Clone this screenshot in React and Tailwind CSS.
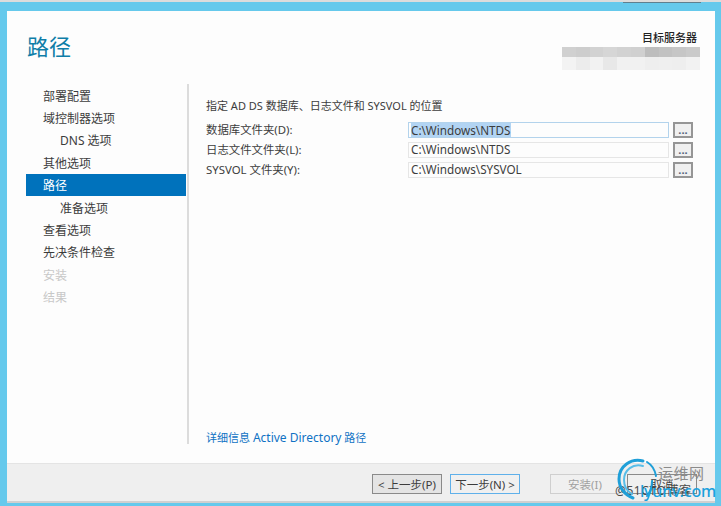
const FONT = "font-['Noto_Sans','Noto_Sans_CJK_SC',sans-serif]";

const navItems = [
  { label: "部署配置" },
  { label: "域控制器选项" },
  { label: "DNS 选项", sub: true },
  { label: "其他选项" },
  { label: "路径", active: true },
  { label: "准备选项", sub: true },
  { label: "查看选项" },
  { label: "先决条件检查" },
  { label: "安装", disabled: true },
  { label: "结果", disabled: true },
];

const paths = [
  { label: "数据库文件夹(D):", value: "C:\\Windows\\NTDS", focused: true },
  { label: "日志文件文件夹(L):", value: "C:\\Windows\\NTDS" },
  { label: "SYSVOL 文件夹(Y):", value: "C:\\Windows\\SYSVOL" },
];

// pixelated blur that hides the server name
const blurTop = ["#d0d0d0", "#cdcdcd", "#d2d2d2", "#d6d6d6", "#d2d2d2", "#d0d0d0", "#bdbdbd", "#c2c2c2", "#c6c6c6", "#cacaca"];
const blurBottom = ["#f3f3f3", "#ececec", "#f2f2f2", "#e8e8e8", "#f1f1f1", "#f1f1f1", "#eeeeee", "#efefef", "#eeeeee", "#f2f2f2"];

function NavItem({ label, sub, active, disabled }) {
  let color = "text-[#3c3c3c]";
  if (active) color = "bg-[#0072bc] text-white";
  if (disabled) color = "text-[#c8c8c8]";
  return (
    <div className={`h-[22.4px] flex items-center text-[12px] ${active ? "pt-[2px]" : "pt-[3px]"} ${sub ? "pl-[34px]" : "pl-[17px]"} ${color}`}>
      {label}
    </div>
  );
}

function PathRow({ label, value, focused }) {
  return (
    <div className="flex items-center h-[20px]">
      <div className="w-[202px] text-[11.4px] text-[#3c3c3c]">{label}</div>
      <div className={`w-[261px] h-[16px] border flex items-center pl-[2px] text-[11.7px] text-[#3c3c3c] ${focused ? "border-[#b3d3ec]" : "border-[#e6e6e6]"}`}>
        {focused ? (
          <span className="bg-[#b2d4f3] h-[14px] leading-[14px] w-[100px]">{value}</span>
        ) : (
          value
        )}
      </div>
      <button className="ml-[4px] w-[20px] h-[16px] border-2 border-[#969696] bg-[#f0f0f0] text-[11px] leading-[12px] font-bold text-[#51607a]">
        ...
      </button>
    </div>
  );
}

function Watermark() {
  return (
    <div className="absolute left-[612px] top-[456px] w-[109px] h-[50px] pointer-events-none">
      <div className="absolute left-[3px] top-[27px] text-[12px] leading-[16px] tracking-[0.6px] whitespace-nowrap text-[#4a4a4a]">
        @51CTO博客
      </div>
      <svg className="absolute left-[4px] top-[1px]" width="48" height="44" viewBox="0 0 48 44" fill="none">
        <path d="M27 4C15 1 3 9 3 22c0 9 6 16 14 19" stroke="#1f9fd8" strokeWidth="3" strokeLinecap="round" />
        <path d="M27 9C17 6 8 13 8 23c0 6 3 11 8 14" stroke="#58bde8" strokeWidth="2" strokeLinecap="round" />
        <path d="M31 5c5 3 8 8 9 14" stroke="#1f9fd8" strokeWidth="2" strokeLinecap="round" />
        <path d="M36 24c0 6-2 11-5 15" stroke="#1f9fd8" strokeWidth="2" strokeLinecap="round" />
      </svg>
      <div className="absolute left-[46px] top-[8px] text-[15px] leading-[18px] tracking-[0.5px] text-[#8b8b8b]">运维网</div>
      <div className="absolute left-[28px] top-[24px] text-[16px] leading-[22px] font-medium tracking-[-0.2px] text-[#1aa0dc]">lyunv.com</div>
    </div>
  );
}

export default function App() {
  return (
    <div className={`relative w-[721px] h-[506px] overflow-hidden bg-white ${FONT}`}>
      <div className="h-[2px] bg-[#dcdcdc]" />
      <div className="h-[504px] bg-[#65c9ec] pt-[9px] pl-[7px] pr-[6px] pb-[3px]">
        <div className="h-full flex flex-col bg-[#fdfdfd]">
          {/* header */}
          <div className="h-[73px] shrink-0 flex justify-between">
            <h1 className="pl-[20px] pt-[19px] text-[22px] leading-[32px] text-[#0f7ea8]">路径</h1>
            <div className="pr-[18px] pt-[19px] flex flex-col items-end">
              <div className="text-[11px] leading-[15px] font-medium text-[#222]">目标服务器</div>
              <div className="mt-[2px] mr-[-3px] w-[138px]">
                <div className="flex h-[10px]">
                  {blurTop.map((c, i) => (
                    <div key={i} className="flex-1" style={{ backgroundColor: c }} />
                  ))}
                </div>
                <div className="flex h-[13px]">
                  {blurBottom.map((c, i) => (
                    <div key={i} className="flex-1" style={{ backgroundColor: c }} />
                  ))}
                </div>
              </div>
            </div>
          </div>

          {/* body */}
          <div className="flex h-[360px] shrink-0">
            <div className="w-[160px] ml-[19px]">
              {navItems.map((item) => (
                <NavItem key={item.label} {...item} />
              ))}
            </div>
            <div className="w-[2px] ml-[1px] bg-[#dcdcdc]" />
            <div className="flex-1 pl-[17px] pt-[14px] flex flex-col">
              <p className="text-[11px] leading-[16px] text-[#3c3c3c]">指定 AD DS 数据库、日志文件和 SYSVOL 的位置</p>
              <div className="mt-[6px]">
                {paths.map((row) => (
                  <PathRow key={row.label} {...row} />
                ))}
              </div>
              <a className="mt-auto mb-[-2px] text-[11px] leading-[16px] text-[#0f72c4]">
                详细信息 <span className="text-[12px]">Active Directory</span> 路径
              </a>
            </div>
          </div>

          <div className="h-[19px] shrink-0" />

          {/* footer */}
          <div className="flex-1 bg-[#efefef] border-t border-[#e4e4e4] border-b-2 border-b-[#d0d0d0] flex items-start pt-[10px] pl-[365px]">
            <button className="w-[70px] h-[20px] pt-[1px] border border-[#8a8a8a] bg-[#e4e4e4] text-[11.5px] text-[#3c3c3c]">&lt; 上一步(P)</button>
            <button className="ml-[8px] w-[70px] h-[20px] pt-[1px] border border-[#5fb0ea] bg-[#f0f0f0] text-[11.5px] text-[#3c3c3c]">下一步(N) &gt;</button>
            <button className="ml-[30px] w-[70px] h-[20px] pt-[1px] border border-[#cfcfcf] bg-[#f0f0f0] text-[11.5px] text-[#a0a0a0]">安装(I)</button>
            <button className="ml-[7px] w-[70px] h-[20px] pt-[1px] border border-[#8a8a8a] bg-[#f0f0f0] text-[11.5px] text-[#3c3c3c]">取消</button>
          </div>
        </div>
      </div>
      <div className="absolute right-[20px] top-[2px] w-[78px] h-[1px] bg-[#5f7f8f]" />
      <Watermark />
    </div>
  );
}
